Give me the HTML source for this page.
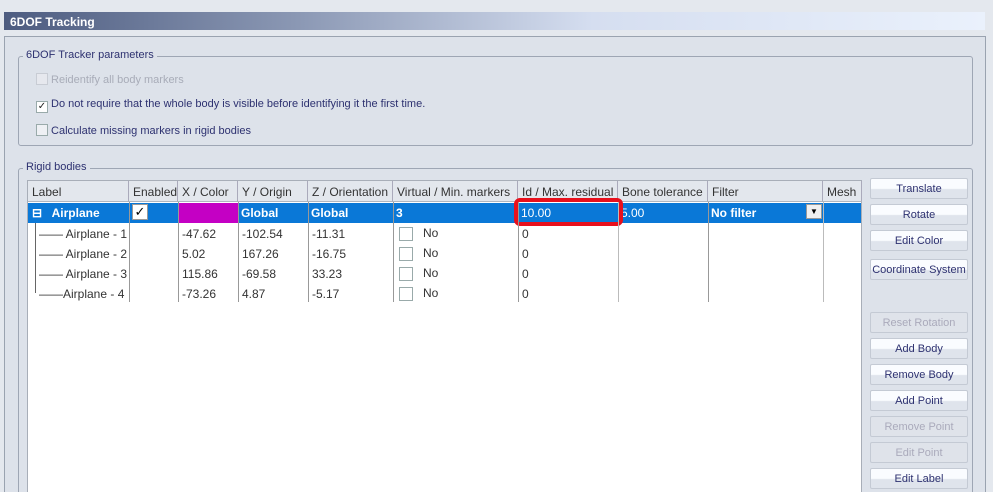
<!DOCTYPE html>
<html><head><style>
*{margin:0;padding:0;box-sizing:border-box}
html{width:993px;height:492px;overflow:hidden}
body{width:993px;height:492px;background:#e4e8ee;font-family:"Liberation Sans",sans-serif;font-size:11px;color:#2d3170;position:relative;overflow:hidden}
.a{position:absolute}
.title{left:4px;top:12px;width:981px;height:18px;background:linear-gradient(90deg,#4d5c80 0%,#8b98b4 30%,#d5def0 60%,#eaf1fc 100%);color:#fff;font-weight:bold;font-size:12px;padding:3px 0 0 6px}
.panel{left:4px;top:36px;width:982px;height:460px;border:1px solid #9aa3b0;border-bottom:none;background:#dde2ea}
.grp{border:1px solid #9ea6b4;border-radius:3px;border-bottom:none}
.lg{background:#dde2ea;padding:0 3px;font-size:11px}
.cb{width:12px;height:12px;border:1px solid #9aa;background:#fff;display:inline-block}
.tbl{left:27px;top:180px;width:835px;height:316px;background:#fff;border:1px solid #a8aeb8;border-bottom:none}
.hd{top:0;height:21px;background:#e3e7ed;border-bottom:1px solid #b0b6c0;color:#333;font-size:12px;padding:4px 0 0 4px;border-right:1px solid #aab;white-space:nowrap;overflow:hidden}
.c{font-size:12px;color:#333;padding:3px 0 0 3px;height:20px;white-space:nowrap}
.vl{width:1px;background:#999;top:21px;height:100px}
.btn{left:870px;width:98px;height:21px;border:1px solid #c4cad4;border-radius:2px;background:linear-gradient(#fafcff 0%,#fafcff 50%,#dfe4ec 55%,#dfe4ec 100%);text-align:center;font-size:11px;padding-top:4px;color:#2d3170}
.dis{color:#aab;background:#dfe3ea}
.sel{top:22px;left:0;width:833px;height:20px;background:#0a78d7}
.w{color:#fff;font-weight:bold;font-size:12px;white-space:nowrap}
</style></head><body>
<div class="a title">6DOF Tracking</div>
<div class="a panel"></div>
<div class="a grp" style="left:18px;top:56px;width:955px;height:90px;border-bottom:1px solid #9ea6b4"></div>
<div class="a lg" style="left:23px;top:49px">6DOF Tracker parameters</div>
<div class="a" style="left:36px;top:73px;color:#a8acb8"><span class="cb" style="vertical-align:-2px;border-color:#c8ccd4;background:#e6e8ee"></span> Reidentify all body markers</div>
<div class="a" style="left:36px;top:98px"><span class="cb" style="vertical-align:-2px;font-size:10px;line-height:10px;text-align:center;color:#222">✓</span> Do not require that the whole body is visible before identifying it the first time.</div>
<div class="a" style="left:36px;top:124px"><span class="cb" style="vertical-align:-2px;background:#eef0f4"></span> Calculate missing markers in rigid bodies</div>
<div class="a grp" style="left:18px;top:168px;width:955px;height:328px"></div>
<div class="a lg" style="left:23px;top:161px">Rigid bodies</div>
<div class="a tbl">
<div class="a hd" style="left:0;width:101px">Label</div>
<div class="a hd" style="left:101px;width:49px">Enabled</div>
<div class="a hd" style="left:150px;width:60px">X / Color</div>
<div class="a hd" style="left:210px;width:70px">Y / Origin</div>
<div class="a hd" style="left:280px;width:85px">Z / Orientation</div>
<div class="a hd" style="left:365px;width:125px">Virtual / Min. markers</div>
<div class="a hd" style="left:490px;width:100px">Id / Max. residual</div>
<div class="a hd" style="left:590px;width:90px">Bone tolerance</div>
<div class="a hd" style="left:680px;width:115px">Filter</div>
<div class="a hd" style="left:795px;width:39px">Mesh</div>
<div class="a sel"></div>
<div class="a w" style="left:4px;top:25px">⊟&nbsp;&nbsp; Airplane</div>
<div class="a" style="left:104px;top:23px;width:16px;height:16px;background:#fff;border:1px solid #999;color:#000;text-align:center;font-size:13px;line-height:14px">✓</div>
<div class="a" style="left:150px;top:22px;width:60px;height:20px;background:#c400c4"></div>
<div class="a w" style="left:213px;top:25px">Global</div>
<div class="a w" style="left:283px;top:25px">Global</div>
<div class="a w" style="left:368px;top:25px">3</div>
<div class="a w" style="left:493px;top:25px;font-weight:normal">10.00</div>
<div class="a w" style="left:593px;top:25px;font-weight:normal">5.00</div>
<div class="a w" style="left:683px;top:25px">No filter</div>
<div class="a" style="left:778px;top:23px;width:16px;height:15px;background:#f0f0f0;border:1px solid #999;color:#000;font-size:8px;text-align:center;line-height:13px">▼</div>
<div class="a" style="left:486px;top:17px;width:109px;height:28px;border:4px solid #e8101c;border-radius:6px"></div>
<div class="a" style="left:7px;top:42px;width:1px;height:70px;background:#666"></div>
<div class="a c" style="left:8px;top:43px;color:#333">—— Airplane - 1</div>
<div class="a c" style="left:8px;top:63px">—— Airplane - 2</div>
<div class="a c" style="left:8px;top:83px">—— Airplane - 3</div>
<div class="a c" style="left:8px;top:103px">——Airplane - 4</div>
<div class="a vl" style="left:101px"></div><div class="a vl" style="left:150px"></div><div class="a vl" style="left:210px"></div><div class="a vl" style="left:280px"></div><div class="a vl" style="left:365px"></div><div class="a vl" style="left:490px"></div><div class="a vl" style="left:590px;background:#bbb"></div><div class="a vl" style="left:680px"></div><div class="a vl" style="left:795px;background:#bbb"></div>
<div class="a c" style="left:151px;top:43px">-47.62</div><div class="a c" style="left:211px;top:43px">-102.54</div><div class="a c" style="left:281px;top:43px">-11.31</div>
<div class="a c" style="left:151px;top:63px">5.02</div><div class="a c" style="left:211px;top:63px">167.26</div><div class="a c" style="left:281px;top:63px">-16.75</div>
<div class="a c" style="left:151px;top:83px">115.86</div><div class="a c" style="left:211px;top:83px">-69.58</div><div class="a c" style="left:281px;top:83px">33.23</div>
<div class="a c" style="left:151px;top:103px">-73.26</div><div class="a c" style="left:211px;top:103px">4.87</div><div class="a c" style="left:281px;top:103px">-5.17</div>
<div class="a c" style="left:368px;top:42px"><span class="cb" style="width:14px;height:14px;vertical-align:-4px"></span> &nbsp;&nbsp;No</div>
<div class="a c" style="left:368px;top:62px"><span class="cb" style="width:14px;height:14px;vertical-align:-4px"></span> &nbsp;&nbsp;No</div>
<div class="a c" style="left:368px;top:82px"><span class="cb" style="width:14px;height:14px;vertical-align:-4px"></span> &nbsp;&nbsp;No</div>
<div class="a c" style="left:368px;top:102px"><span class="cb" style="width:14px;height:14px;vertical-align:-4px"></span> &nbsp;&nbsp;No</div>
<div class="a c" style="left:491px;top:43px">0</div><div class="a c" style="left:491px;top:63px">0</div><div class="a c" style="left:491px;top:83px">0</div><div class="a c" style="left:491px;top:103px">0</div>
</div>
<div class="a btn" style="top:178px">Translate</div>
<div class="a btn" style="top:204px">Rotate</div>
<div class="a btn" style="top:230px">Edit Color</div>
<div class="a btn" style="top:259px">Coordinate System</div>
<div class="a btn dis" style="top:312px">Reset Rotation</div>
<div class="a btn" style="top:338px">Add Body</div>
<div class="a btn" style="top:364px">Remove Body</div>
<div class="a btn" style="top:390px">Add Point</div>
<div class="a btn dis" style="top:416px">Remove Point</div>
<div class="a btn dis" style="top:442px">Edit Point</div>
<div class="a btn" style="top:468px">Edit Label</div>
</body></html>
